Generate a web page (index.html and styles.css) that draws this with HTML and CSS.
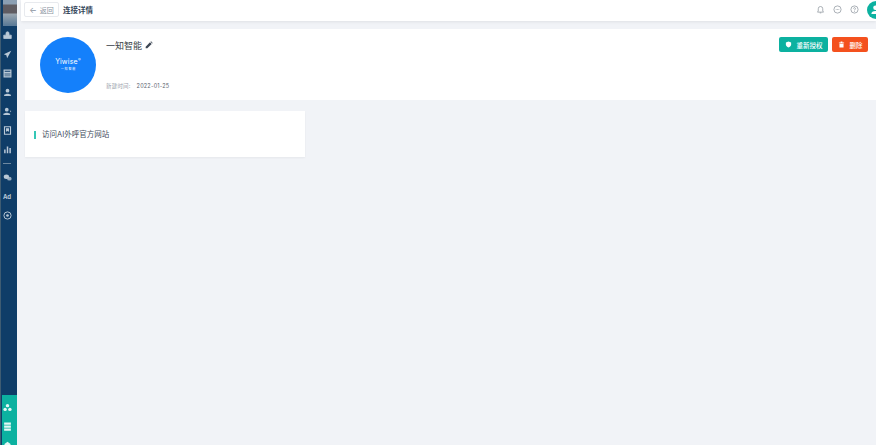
FILE: index.html
```html
<!DOCTYPE html>
<html lang="zh-CN">
<head>
  <meta charset="UTF-8">
  <title>连接详情</title>
  <link rel="stylesheet" href="styles.css">
</head>
<body>
  <!-- Sidebar -->
  <aside class="sidebar">
    <div class="side-top">
      <div class="side-logo"></div>
      <ul class="side-nav">
        <li><svg viewBox="0 0 12 12"><path d="M1 5.500h10v4.500H1zM4 5.500V3a2 2 0 0 1 4 0v2.500" fill="currentColor" stroke="currentColor"/></svg></li>
        <li><svg viewBox="0 0 12 12"><path d="M11 1 1 5.500l3.500 1.500L5.500 11z" fill="currentColor"/></svg></li>
        <li><svg viewBox="0 0 12 12"><path d="M1.500 1.500h9v9h-9zM1.500 4.500h9" fill="none" stroke="currentColor" stroke-width="1.600"/><path d="M2 5h8v5H2z" fill="currentColor" opacity=".6"/></svg></li>
        <li><svg viewBox="0 0 12 12"><circle cx="6" cy="3.500" r="2.500" fill="currentColor"/><path d="M1.500 10.500h9V9L7 7.500H5L1.500 9z" fill="currentColor"/></svg></li>
        <li><svg viewBox="0 0 12 12"><circle cx="5" cy="3.500" r="2.500" fill="currentColor"/><path d="M.5 10.500h9V9L6 7.500H4L.5 9zM9 4l2 2-1 1z" fill="currentColor"/></svg></li>
        <li><svg viewBox="0 0 12 12"><path d="M2 1h8v10H2z" fill="none" stroke="currentColor" stroke-width="1.500"/><path d="M4 3h4v4.500L6 6.500 4 7.500z" fill="currentColor"/></svg></li>
        <li><svg viewBox="0 0 12 12"><path d="M1.500 6h2v5h-2zM5 2h2v9H5zM8.500 4h2v7h-2z" fill="currentColor"/></svg></li>
        <li class="side-rule"></li>
        <li><svg viewBox="0 0 12 12"><ellipse cx="4.500" cy="5" rx="3.500" ry="3" fill="currentColor"/><ellipse cx="8.500" cy="7.500" rx="3" ry="2.500" fill="currentColor" opacity=".8"/></svg></li>
        <li class="side-ad">Ad</li>
        <li><svg viewBox="0 0 12 12"><circle cx="6" cy="6" r="4.800" fill="none" stroke="currentColor" stroke-width="1.300"/><circle cx="6" cy="6" r="1.800" fill="currentColor"/></svg></li>
      </ul>
    </div>
    <div class="side-bottom">
      <svg viewBox="0 0 12 12"><circle cx="6" cy="3.500" r="2.300" fill="currentColor"/><circle cx="2.800" cy="8.500" r="2.300" fill="currentColor"/><circle cx="9.200" cy="8.500" r="2.300" fill="currentColor"/></svg>
      <svg viewBox="0 0 12 12"><path d="M1.500 .5h9v3h-9zM1.500 4.500h9v3h-9zM1.500 8.500h9v3h-9z" fill="currentColor"/></svg>
      <svg viewBox="0 0 12 12"><path d="M6 1 10 4v8H2V4z" fill="currentColor"/></svg>
    </div>
  </aside>

  <div class="main">
    <!-- Header -->
    <header class="topbar">
      <div class="topbar-left">
        <button class="back-btn"><span class="back-arrow">←</span>返回</button>
        <span class="page-title">连接详情</span>
      </div>
      <div class="topbar-right">
        <svg class="top-icon" viewBox="0 0 12 12"><path d="M2 9.500h8L9 8V5a3 3 0 0 0-6 0v3zM5 10.500h2" fill="none" stroke="currentColor"/></svg>
        <svg class="top-icon" viewBox="0 0 12 12"><circle cx="6" cy="6" r="4.800" fill="none" stroke="currentColor"/><path d="M3.700 6h1M5.500 6h1M7.300 6h1" stroke="currentColor"/></svg>
        <svg class="top-icon" viewBox="0 0 12 12"><circle cx="6" cy="6" r="4.800" fill="none" stroke="currentColor"/><path d="M4.700 4.800a1.300 1.300 0 1 1 1.900 1.200L6 6.600v.6M6 8.200v1" fill="none" stroke="currentColor"/></svg>
        <div class="avatar"><svg viewBox="0 0 12 12"><circle cx="6" cy="4" r="2.500" fill="#fff"/><path d="M1.500 11a4.500 3.500 0 0 1 9 0z" fill="#fff"/></svg></div>
      </div>
    </header>

    <!-- Connection info -->
    <section class="info-card">
      <div class="logo-circle">
        <div class="logo-name">Yiwise<sup>®</sup></div>
        <div class="logo-sub">一 知 智 能</div>
      </div>
      <div class="info-text">
        <h1 class="info-name">一知智能 <svg class="edit-icon" viewBox="0 0 12 12"><path d="M1 11V8.500L7.500 2 10 4.500 3.500 11zM8.300 1.200l.8-.7 2.400 2.400-.7.800z" fill="currentColor"/></svg></h1>
        <p class="info-date"><span class="date-label">新建时间:</span>2022-01-25</p>
      </div>
      <div class="info-actions">
        <button class="btn btn-green"><svg viewBox="0 0 12 12"><path d="M6 1 10.500 2.500V6c0 2.500-2 4-4.500 5C3.500 10 1.500 8.500 1.500 6V2.500z" fill="#fff"/></svg>重新授权</button>
        <button class="btn btn-red"><svg viewBox="0 0 12 12"><path d="M1.500 2.500h9v1.200h-9zM4.500 1h3v1.500h-3zM2.500 4.500h7V11h-7z" fill="#fff"/></svg>删除</button>
      </div>
    </section>

    <!-- Link card -->
    <section class="link-card">
      <span class="link-title">访问AI外呼官方网站</span>
    </section>
  </div>
</body>
</html>
```

FILE: styles.css
```css
* {
  margin: 0;
  padding: 0;
  box-sizing: border-box;
}

html, body {
  height: 100%;
  overflow: hidden;
}

body {
  display: flex;
  font-family: "Inter", "Noto Sans CJK SC", sans-serif;
  color: #333;
  background-color: #f1f3f7;
}

/* Sidebar */
.sidebar {
  width: 17px;
  flex-shrink: 0;
  display: flex;
  flex-direction: column;
  justify-content: space-between;
  background-color: #0f3d68;
  border-left: 1px solid #3f5c72;
  color: #b9c8d6;
}

.side-logo {
  height: 26px;
  margin-left: 2px;
  background: linear-gradient(180deg, #8b9fb3 0, #8b9fb3 4px, #5f5c62 5px, #5f5c62 13px, #9aa6b0 14px, #5d7c98 25px);
}

.side-nav {
  list-style: none;
  padding-right: 4px;
}

.side-nav li {
  height: 19px;
  display: flex;
  align-items: center;
  justify-content: center;
}

.side-nav svg {
  width: 9px;
  height: 9px;
}

.side-nav .side-rule {
  height: 9px;
}

.side-rule::after {
  content: "";
  width: 8px;
  height: 1px;
  background-color: #6d88a0;
}

.side-nav .side-ad {
  font-size: 6px;
  font-weight: 700;
}

.side-bottom {
  height: 50px;
  background-color: #0cb1a0;
  color: #e4f7f4;
  display: flex;
  flex-direction: column;
  align-items: center;
  gap: 10px;
  padding: 8px 4px 0 0;
  margin-left: 1px;
  overflow: hidden;
}

.side-bottom svg {
  width: 9px;
  height: 9px;
  flex-shrink: 0;
}

/* Main */
.main {
  flex: 1;
  min-width: 0;
}

.topbar {
  height: 21px;
  margin-left: 4px;
  background: white;
  display: flex;
  align-items: flex-start;
  justify-content: space-between;
  padding: 2px 0 0 3px;
  box-shadow: 0 1px 3px rgba(0,0,0,0.08);
}

.topbar-left {
  display: flex;
  align-items: center;
}

.back-btn {
  width: 35px;
  height: 15px;
  background: white;
  border: 1px solid #e8eaee;
  border-radius: 2px;
  font-family: inherit;
  font-size: 7px;
  color: #8a93a0;
  display: flex;
  align-items: center;
  justify-content: center;
  gap: 3px;
}

.back-arrow {
  font-size: 8px;
}

.page-title {
  margin-left: 4px;
  font-size: 7.500px;
  font-weight: 700;
  color: #34465a;
}

.topbar-right {
  display: flex;
  align-items: center;
  gap: 8px;
  height: 15px;
  color: #8f979f;
}

.top-icon {
  width: 9px;
  height: 9px;
}

.avatar {
  width: 18px;
  height: 18px;
  margin-right: -9px;
  border-radius: 50%;
  background-color: #0cb1a0;
  padding: 3px;
}

.avatar svg {
  display: block;
  width: 11px;
  height: 11px;
}

.info-card {
  height: 71px;
  margin: 8px 0 0 8px;
  background: white;
  display: flex;
  padding: 8px 8px 0 15px;
}

.logo-circle {
  width: 56px;
  height: 56px;
  border-radius: 50%;
  background-color: #1480fb;
  color: white;
  text-align: center;
  padding-top: 21px;
}

.logo-name {
  font-size: 7px;
  line-height: 8px;
  letter-spacing: 0.2px;
}

.logo-name sup {
  font-size: 4px;
  line-height: 0;
}

.logo-sub {
  font-size: 3px;
  line-height: 4px;
  margin-top: 1px;
}

.info-text {
  flex: 1;
  margin-left: 10px;
}

.info-name {
  font-size: 9px;
  font-weight: 400;
  line-height: 14px;
  margin-top: 2px;
  color: #3a3f47;
}

.edit-icon {
  width: 8px;
  height: 8px;
  color: #3c4654;
}

.info-date {
  margin-top: 28px;
  font-size: 5.500px;
  line-height: 10px;
  color: #59626e;
  letter-spacing: 0.2px;
}

.date-label {
  color: #98a0aa;
  margin-right: 6px;
}

.info-actions {
  display: flex;
  gap: 4px;
}

.btn {
  height: 15px;
  border: none;
  border-radius: 2px;
  color: white;
  font-family: inherit;
  font-size: 6.500px;
  font-weight: 500;
  display: flex;
  align-items: center;
  justify-content: center;
  gap: 5px;
}

.btn svg {
  width: 7px;
  height: 7px;
}

.btn-green {
  width: 49px;
  background-color: #0cb1a0;
}

.btn-red {
  width: 36px;
  background-color: #f4511e;
}

.link-card {
  width: 280px;
  height: 46px;
  margin: 11px 0 0 8px;
  background: white;
  box-shadow: 0 1px 2px rgba(0,0,0,0.05);
  display: flex;
  align-items: center;
  padding: 1px 0 0 9px;
}

.link-title {
  border-left: 2px solid #35c7b6;
  padding-left: 6px;
  font-size: 7.500px;
  line-height: 8px;
  color: #3f4e60;
}
```
